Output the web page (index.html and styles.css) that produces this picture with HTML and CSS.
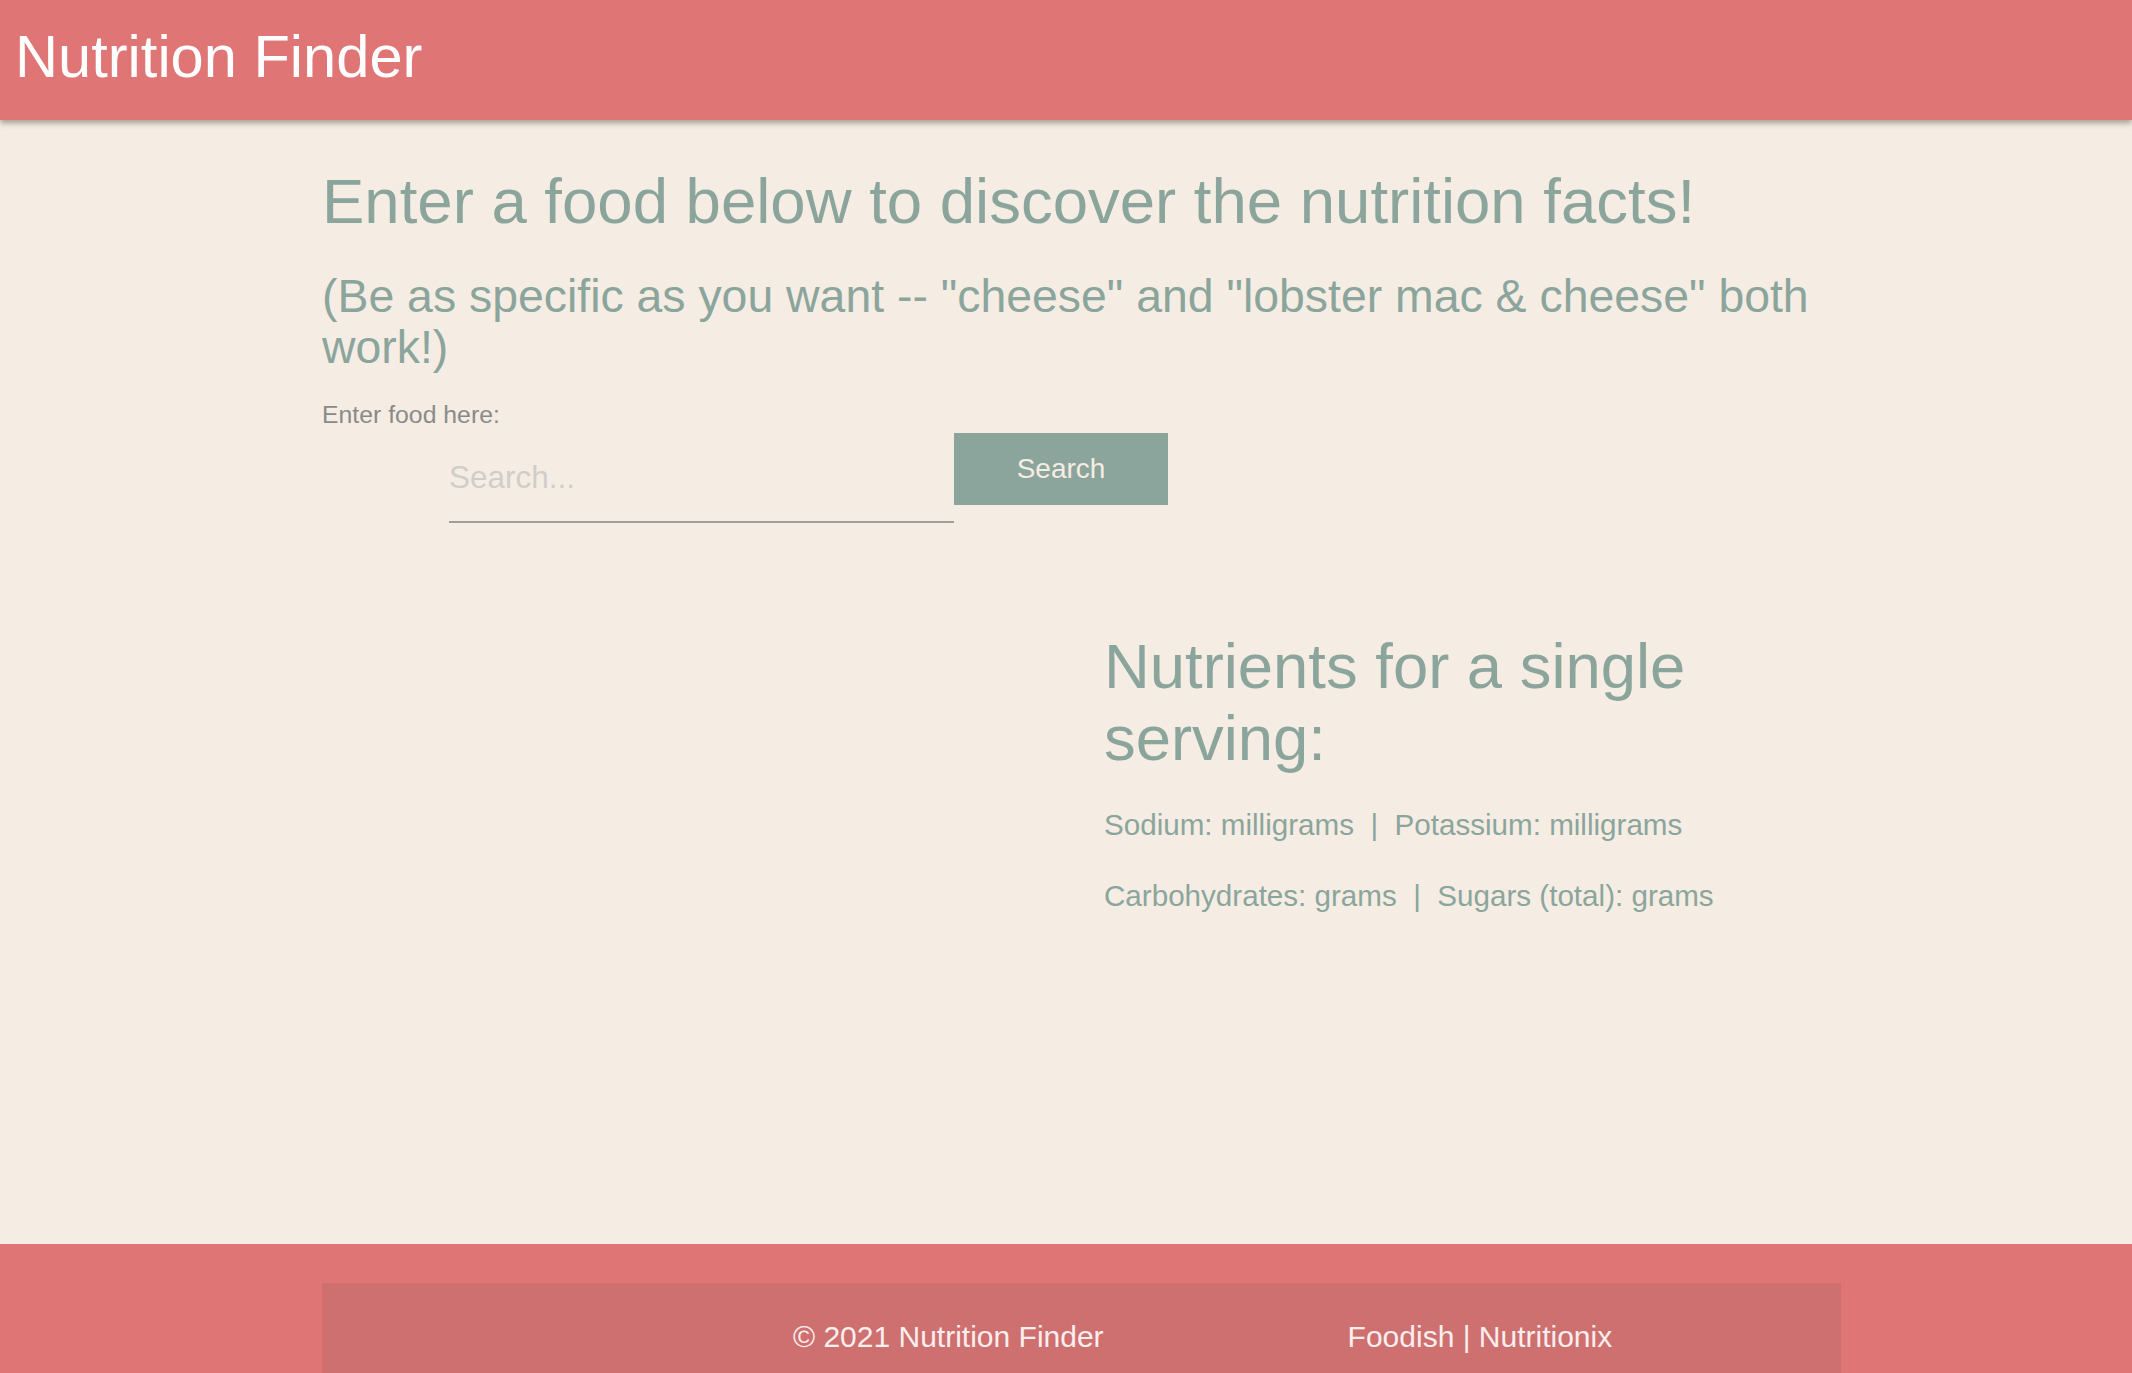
FILE: index.html
```html
<!DOCTYPE html>
<html lang="en">
<head>
<meta charset="utf-8">
<title>Nutrition Finder</title>
<link rel="stylesheet" href="styles.css">
</head>
<body>
<header class="topbar">
  <h1 class="brand">Nutrition Finder</h1>
</header>
<main class="main">
  <div class="container">
    <h1 class="title">Enter a food below to discover the nutrition facts!</h1>
    <h2 class="subtitle">(Be as specific as you want -- "cheese" and "lobster mac &amp; cheese" both work!)</h2>
    <label class="label" for="food">Enter food here:</label>
    <div class="search-row">
      <input id="food" class="search-input" type="text" placeholder="Search...">
      <button class="search-btn" type="button">Search</button>
    </div>
    <div class="results">
      <div class="results-left"></div>
      <div class="results-right">
        <h2 class="nutrients-title">Nutrients for a single serving:</h2>
        <p class="nutrient-line">Sodium: milligrams &nbsp;|&nbsp; Potassium: milligrams</p>
        <p class="nutrient-line">Carbohydrates: grams &nbsp;|&nbsp; Sugars (total): grams</p>
      </div>
    </div>
  </div>
</main>
<footer class="footer">
  <div class="footer-inner">
    <span class="copy">© 2021 Nutrition Finder</span>
    <span class="credits">Foodish | Nutritionix</span>
  </div>
</footer>
</body>
</html>
```
FILE: styles.css
```css
* { box-sizing: border-box; }
html, body {
  margin: 0;
  padding: 0;
}
body {
  background: #f5ede3;
  font-family: "Liberation Sans", Arial, Helvetica, sans-serif;
  color: #8ba59d;
}
.topbar {
  background: #e07575;
  height: 120px;
  padding: 0 0 0 15px;
  box-shadow: 0 3px 6px rgba(0, 0, 0, 0.35);
  position: relative;
  z-index: 1;
}
.brand {
  margin: 0;
  color: #ffffff;
  font-weight: 400;
  font-size: 59.6px;
  line-height: 114px;
}
.main {
  min-height: 1124px;
  padding-top: 43px;
}
.container {
  margin-left: 322px;
  width: 1520px;
}
.title {
  margin: 0;
  font-weight: 400;
  font-size: 63.5px;
  line-height: 77px;
  color: #8ba59d;
}
.subtitle {
  margin: 31px 0 0 0;
  font-weight: 400;
  font-size: 46.4px;
  line-height: 51px;
  color: #8ba59d;
}
.label {
  display: block;
  margin-top: 28px;
  font-size: 24.8px;
  line-height: 28px;
  color: #8c8a88;
}
.search-row {
  display: flex;
  align-items: flex-start;
  margin-top: 4px;
  padding-left: 127px;
}
.search-input {
  width: 505px;
  height: 90px;
  padding: 0;
  border: 0;
  border-bottom: 2px solid #a19d9a;
  background: transparent;
  font-family: "Liberation Sans", Arial, sans-serif;
  font-size: 31.5px;
  color: #6f6f6f;
  outline: none;
}
.search-input::placeholder {
  color: #d0cdca;
}
.search-btn {
  width: 214px;
  height: 72px;
  border: 0;
  background: #8ba59d;
  color: #f5ede3;
  font-family: "Liberation Sans", Arial, sans-serif;
  font-size: 28px;
  padding: 0;
  cursor: pointer;
}
.results {
  display: grid;
  grid-template-columns: 760px 760px;
  margin-top: 107px;
}
.results-right {
  padding-left: 22px;
  padding-right: 20px;
}
.nutrients-title {
  margin: 0;
  font-weight: 400;
  font-size: 63.4px;
  line-height: 72px;
  color: #8ba59d;
}
.nutrient-line {
  margin: 33px 0 0 0;
  font-size: 29.6px;
  line-height: 36px;
  color: #8ba59d;
}
.nutrient-line + .nutrient-line {
  margin-top: 35px;
}
.footer {
  background: #e07575;
  padding: 39px 0 0 322px;
}
.footer-inner {
  width: 1519px;
  height: 140px;
  background: #cf7070;
  padding: 36px 0 0 471px;
  display: flex;
  gap: 244px;
  font-size: 30px;
  line-height: 36px;
  color: #fbeeee;
}
```
